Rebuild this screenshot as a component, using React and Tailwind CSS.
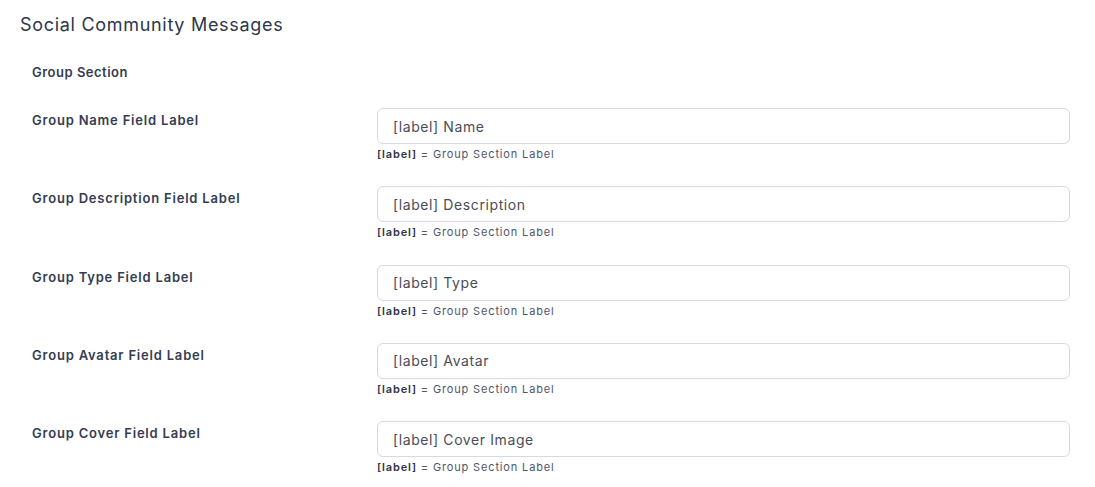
import React from "react";

const fields = [
  { label: "Group Name Field Label", value: "[label] Name" },
  { label: "Group Description Field Label", value: "[label] Description" },
  { label: "Group Type Field Label", value: "[label] Type" },
  { label: "Group Avatar Field Label", value: "[label] Avatar" },
  { label: "Group Cover Field Label", value: "[label] Cover Image" },
];

const FieldRow = ({ label, value }) => (
  <div className="flex items-start mb-[24.3px]">
    <label className="w-[345px] shrink-0 pt-[2px] text-[13px] leading-[20px] font-semibold tracking-[0.8px] text-[#353c52]">
      {label}
    </label>
    <div className="flex-1">
      <input
        type="text"
        defaultValue={value}
        className="w-full h-[36px] px-[15px] rounded-[6px] border border-[#d5d9e3] bg-white text-[14px] tracking-[0.6px] text-[#4a4d57] outline-none"
      />
      <p className="mt-[2px] text-[11px] leading-[16px] tracking-[0.85px] text-[#50556a]">
        <span className="font-semibold text-[#2f3548]">[label]</span> = Group Section Label
      </p>
    </div>
  </div>
);

export default function App() {
  return (
    <div
      className="w-[1095px] min-h-[487px] bg-white pl-[20px] pr-[25px] pt-[12px]"
      style={{ fontFamily: "Inter, 'Open Sans', sans-serif" }}
    >
      <h1 className="text-[18px] leading-[26px] font-normal tracking-[0.7px] text-[#2e364b]">
        Social Community Messages
      </h1>
      <div className="pl-[12px] pt-[24px]">
        <h2 className="text-[13px] leading-[20px] font-semibold tracking-[0.5px] text-[#353c52] mb-[26px]">
          Group Section
        </h2>
        {fields.map((f) => (
          <FieldRow key={f.label} label={f.label} value={f.value} />
        ))}
      </div>
    </div>
  );
}
